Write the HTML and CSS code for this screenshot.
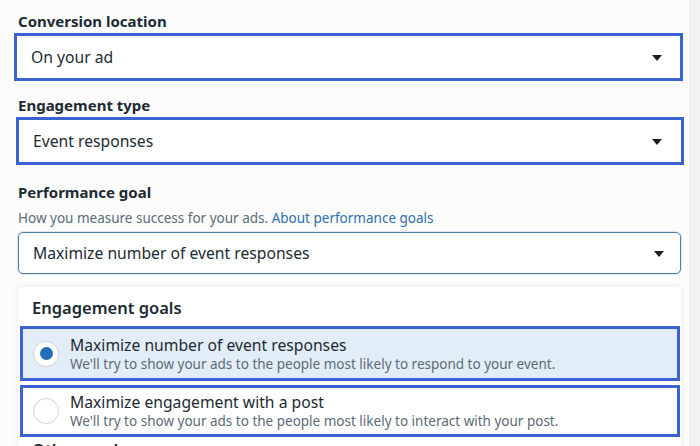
FILE: index.html
```html
<!DOCTYPE html>
<html lang="en">
<head>
  <meta charset="UTF-8">
  <meta name="viewport" content="width=device-width, initial-scale=1.0">
  <title>Performance goal</title>
  <link rel="stylesheet" href="styles.css">
</head>
<body>
  <div class="page">
    <div class="content">
      <!-- Conversion location -->
      <div class="field">
        <div class="field-label">Conversion location</div>
        <div class="select select-marked first">
          <span>On your ad</span>
          <span class="caret"></span>
        </div>
      </div>

      <!-- Engagement type -->
      <div class="field">
        <div class="field-label">Engagement type</div>
        <div class="select select-marked second">
          <span>Event responses</span>
          <span class="caret"></span>
        </div>
      </div>

      <!-- Performance goal -->
      <div class="field">
        <div class="field-label">Performance goal</div>
        <div class="field-help">How you measure success for your ads. <a href="#">About performance goals</a></div>
        <div class="select select-open">
          <span>Maximize number of event responses</span>
          <span class="caret"></span>
        </div>
      </div>

      <!-- Dropdown menu -->
      <div class="menu">
        <div class="menu-title">Engagement goals</div>
        <div class="option option-selected">
          <span class="radio checked"></span>
          <div class="option-text">
            <div class="option-name">Maximize number of event responses</div>
            <div class="option-desc">We'll try to show your ads to the people most likely to respond to your event.</div>
          </div>
        </div>
        <div class="option option-last">
          <span class="radio"></span>
          <div class="option-text">
            <div class="option-name">Maximize engagement with a post</div>
            <div class="option-desc">We'll try to show your ads to the people most likely to interact with your post.</div>
          </div>
        </div>
        <div class="menu-title menu-next">Other goals</div>
      </div>
    </div>
    <div class="gutter"></div>
  </div>
</body>
</html>
```

FILE: styles.css
```css
/* Global reset */
* {
  margin: 0;
  padding: 0;
  box-sizing: border-box;
}

body {
  font-family: 'Noto Sans', 'Open Sans', sans-serif;
  background-color: #ffffff;
  color: #1c2b33;
  height: 446px;
  overflow: hidden;
}

/* Page */
.page {
  display: flex;
  height: 446px;
}

.content {
  flex: 1;
  padding: 10px 0 0 18px;
  background-color: #fcfcfd;
}

.gutter {
  width: 11px;
  background-color: #f2f3f5;
  border-left: 1px solid #eceef0;
}

/* Fields */
.field {
  margin-bottom: 13px;
}

.field + .field + .field {
  margin-bottom: 0;
}

.field:nth-child(2) {
  margin-bottom: 16px;
}

.field-label {
  font-size: 15px;
  font-weight: 700;
  line-height: 22px;
  margin-bottom: 1px;
}

.field-help {
  font-size: 13.5px;
  color: #5b6b78;
  line-height: 18px;
  margin: 6px 0 5px;
}

.field-help a {
  color: #2f6fa8;
  text-decoration: none;
}

/* Select boxes */
.select {
  display: flex;
  align-items: center;
  justify-content: space-between;
  background-color: #ffffff;
  font-size: 15.7px;
  padding: 0 18px 0 14px;
}

.select-marked {
  height: 48px;
  border: 3px solid #3b62d3;
}

.select-marked.first {
  margin-left: -4px;
  margin-right: 6px;
}

.select-marked.second {
  margin-left: -2px;
  margin-right: 5px;
  padding-right: 19px;
}

.select-open {
  height: 42px;
  border: 1px solid #4f7ca8;
  border-radius: 5px;
  box-shadow: 0 0 0 1px #dce8f3;
  margin-right: 8px;
  padding-right: 16px;
}

.caret {
  width: 0;
  height: 0;
  border-left: 5px solid transparent;
  border-right: 5px solid transparent;
  border-top: 6px solid #1c1e21;
  margin-top: 1px;
}

/* Dropdown menu */
.menu {
  margin-top: 13px;
  margin-right: 8px;
  background-color: #ffffff;
  box-shadow: 0 0 6px rgba(0, 0, 0, 0.08);
  border-radius: 4px 4px 0 0;
  padding: 8px 1px 0 2px;
}

.menu-title {
  font-size: 16.5px;
  font-weight: 600;
  line-height: 26px;
  padding-left: 12px;
  margin-bottom: 5px;
}

.menu-next {
  margin-top: 0;
}

.option {
  display: flex;
  align-items: center;
  border: 3px solid #3b62d3;
  height: 52px;
  padding-left: 10px;
  margin-bottom: 4px;
}

.option-last {
  margin-bottom: 0;
}

.option-selected {
  background-color: #e3edf7;
  height: 55px;
}

.radio {
  width: 26px;
  height: 26px;
  border-radius: 50%;
  border: 1px solid #d0d4d8;
  background-color: #ffffff;
  display: flex;
  align-items: center;
  justify-content: center;
  margin-right: 11px;
  flex-shrink: 0;
}

.radio.checked::after {
  content: "";
  width: 13px;
  height: 13px;
  border-radius: 50%;
  background-color: #1f6fb8;
}

.option-name {
  font-size: 15.7px;
  line-height: 20px;
}

.option-desc {
  font-size: 13.5px;
  line-height: 18px;
  color: #5b6b78;
}
```
